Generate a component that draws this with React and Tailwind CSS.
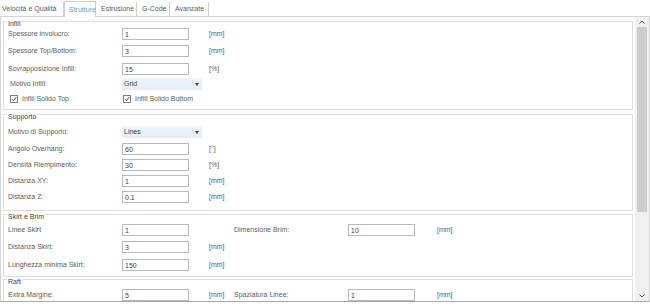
import React from "react";

const tabs = [
  { name: "Velocità e Qualità", w: "w-[64px]", pl: "pl-[2px]" },
  { name: "Strutture", w: "w-[32px]", pl: "pl-[4px]", active: true },
  { name: "Estrusione", w: "w-[41px]", pl: "pl-[5px]" },
  { name: "G-Code", w: "w-[33px]", pl: "pl-[5px]" },
  { name: "Avanzate", w: "w-[39px]", pl: "pl-[5px]" },
];

function Field({ value }) {
  return (
    <input
      readOnly
      value={value}
      className="h-[12px] w-[67px] shrink-0 border border-[#b9b9b9] bg-white px-[2px] text-[7px] leading-[10px] text-[#444] outline-none"
    />
  );
}

function Select({ value }) {
  return (
    <div className="flex h-[12px] w-[80px] shrink-0 items-center justify-between bg-gradient-to-b from-[#eef5fa] to-[#e3eef6] pl-[2px] pr-[3px] text-[#444]">
      <span>{value}</span>
      <svg width="4" height="3" viewBox="0 0 4 3">
        <polygon points="0,0 4,0 2,3" fill="#444" />
      </svg>
    </div>
  );
}

function Check({ label }) {
  return (
    <div className="flex items-center gap-[4px]">
      <div className="flex h-[8px] w-[8px] items-center justify-center border border-[#808080] bg-white">
        <svg width="6" height="6" viewBox="0 0 6 6">
          <polyline points="0.8,3 2.4,4.8 5.4,1" fill="none" stroke="#444" strokeWidth="0.9" />
        </svg>
      </div>
      <span>{label}</span>
    </div>
  );
}

function Row({ label, value, unit, label2, value2, unit2, mt }) {
  return (
    <div className={`flex h-[12px] items-center ${mt}`}>
      <span className="w-[114px] shrink-0">{label}</span>
      <Field value={value} />
      <span className="ml-[20px] w-[25px] shrink-0">{unit}</span>
      {label2 && (
        <>
          <span className="w-[114px] shrink-0">{label2}</span>
          <Field value={value2} />
          <span className="ml-[22px]">{unit2}</span>
        </>
      )}
    </div>
  );
}

function Group({ title, mt, pb, children }) {
  return (
    <fieldset className={`mx-[2px] border border-[#dedede] pl-[4px] ${mt} ${pb}`}>
      <legend className="-ml-[1px] px-[1px] pt-[6px] leading-[8px] text-[#444]">{title}</legend>
      {children}
    </fieldset>
  );
}

export default function App() {
  return (
    <div className="h-[306px] w-[650px] overflow-hidden bg-white text-[7px] leading-[8px] text-[#606060] font-['Liberation_Sans',Arial,sans-serif]">
      <div className="flex h-[16px] items-end">
        {tabs.map((t) =>
          t.active ? (
            <div
              key={t.name}
              className={`relative z-10 -mb-px flex h-[16px] items-center border-x border-t border-[#cfcfcf] bg-white text-[#45abd9] ${t.w} ${t.pl}`}
            >
              {t.name}
            </div>
          ) : (
            <div key={t.name} className={`flex h-[14px] items-center border-r border-[#cfcfcf] ${t.w} ${t.pl}`}>
              {t.name}
            </div>
          )
        )}
      </div>

      <div className="flex h-[286px] border border-[#d4d4d4] border-b-[#a8a8a8]">
        <div className="flex-1 overflow-hidden">
          <Group title="Infill" mt="-mt-[3px]" pb="pb-[4px]">
            <Row label="Spessore involucro:" value="1" unit="[mm]" mt="mt-0" />
            <Row label="Spessore Top/Bottom:" value="3" unit="[mm]" mt="mt-[5px]" />
            <Row label="Sovrapposizione Infill:" value="15" unit="[%]" mt="mt-[6px]" />
            <div className="mt-[3px] flex h-[12px] items-center">
              <span className="w-[114px] shrink-0 pl-[2px]">Motivo Infill:</span>
              <Select value="Grid" />
            </div>
            <div className="mt-[3px] flex h-[12px] items-center pl-[2px]">
              <div className="w-[113px] shrink-0">
                <Check label="Infill Solido Top" />
              </div>
              <Check label="Infill Solido Bottom" />
            </div>
          </Group>

          <Group title="Supporto" mt="-mt-[3px]" pb="pb-[7px]">
            <div className="mt-[5px] flex h-[12px] items-center">
              <span className="w-[114px] shrink-0">Motivo di Supporto:</span>
              <Select value="Lines" />
            </div>
            <Row label="Angolo Overhang:" value="60" unit="[°]" mt="mt-[5px]" />
            <Row label="Densità Riempimento:" value="30" unit="[%]" mt="mt-[4px]" />
            <Row label="Distanza XY:" value="1" unit="[mm]" mt="mt-[4px]" />
            <Row label="Distanza Z:" value="0.1" unit="[mm]" mt="mt-[4px]" />
          </Group>

          <Group title="Skirt e Brim" mt="-mt-[4px]" pb="pb-[5px]">
            <div className="mt-[3px] flex h-[12px] items-center">
              <span className="w-[114px] shrink-0">Linee Skirt</span>
              <Field value="1" />
              <span className="ml-[45px] w-[114px] shrink-0">Dimensione Brim:</span>
              <Field value="10" />
              <span className="ml-[22px]">[mm]</span>
            </div>
            <Row label="Distanza Skirt:" value="3" unit="[mm]" mt="mt-[5px]" />
            <Row label="Lunghezza minima Skirt:" value="150" unit="[mm]" mt="mt-[6px]" />
          </Group>

          <Group title="Raft" mt="-mt-[5px]" pb="pb-[8px]">
            <Row
              label="Extra Margine:"
              value="5"
              unit="[mm]"
              label2="Spaziatura Linee:"
              value2="1"
              unit2="[mm]"
              mt="mt-[3px]"
            />
          </Group>
        </div>

        <div className="flex w-[14px] shrink-0 flex-col bg-[#f0f0f0]">
          <div className="flex h-[10px] items-center justify-center">
            <svg width="6" height="4" viewBox="0 0 6 4">
              <polyline points="0.5,3.5 3,1 5.5,3.5" fill="none" stroke="#555" strokeWidth="1" />
            </svg>
          </div>
          <div className="mx-[2px] h-[185px] bg-[#cdcdcd]" />
          <div className="flex-1" />
          <div className="flex h-[10px] items-center justify-center">
            <svg width="6" height="4" viewBox="0 0 6 4">
              <polyline points="0.5,0.5 3,3 5.5,0.5" fill="none" stroke="#555" strokeWidth="1" />
            </svg>
          </div>
        </div>
      </div>
    </div>
  );
}
